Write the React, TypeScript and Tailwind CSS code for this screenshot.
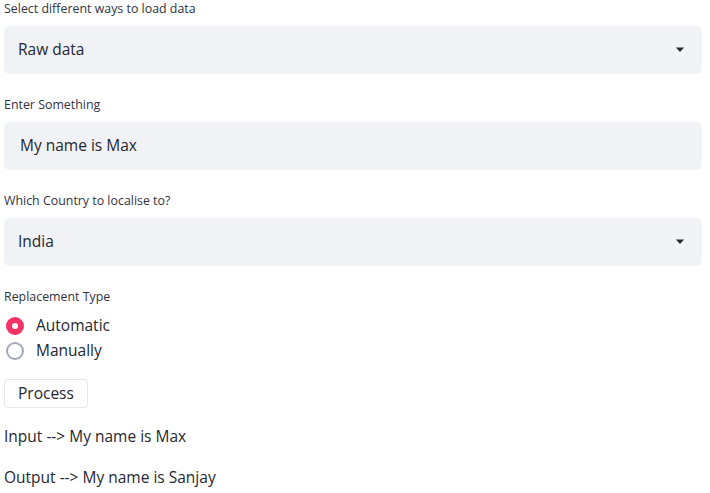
import React from "react";

const font = { fontFamily: '"Open Sans", "Noto Sans", sans-serif' };

function Caret() {
  return (
    <svg width="10" height="6" viewBox="0 0 10 6" className="shrink-0">
      <path d="M1 0.5 L9 0.5 L5 5 Z" fill="#262730" />
    </svg>
  );
}

function Label({ children }: { children: React.ReactNode }) {
  return (
    <div className="h-[18px] mb-2 text-[12.4px] leading-[18px] text-[#31333f]">{children}</div>
  );
}

function Select({ label, value }: { label: string; value: string }) {
  return (
    <div>
      <Label>{label}</Label>
      <div className="h-12 rounded-md bg-[#f0f2f6] flex items-center justify-between pl-[14px] pr-[17px] text-[15.5px] text-[#262730]">
        <span>{value}</span>
        <Caret />
      </div>
    </div>
  );
}

function Radio({ checked, label }: { checked?: boolean; label: string }) {
  return (
    <div className="flex items-center h-[25px] gap-3">
      {checked ? (
        <span className="ml-[2px] w-[18px] h-[18px] rounded-full bg-[#f63366] flex items-center justify-center">
          <span className="w-[6px] h-[6px] rounded-full bg-white" />
        </span>
      ) : (
        <span className="ml-[2px] w-[18px] h-[18px] rounded-full border-2 border-[#a3a8b8] bg-white" />
      )}
      <span className="text-[15.5px] text-[#262730]">{label}</span>
    </div>
  );
}

export default function App() {
  return (
    <div style={font} className="w-[710px] h-[493px] bg-white pl-1 pr-2 text-[#262730] overflow-hidden">
      <div className="flex flex-col gap-[22px]">
        <Select label="Select different ways to load data" value="Raw data" />
        <div>
          <Label>Enter Something</Label>
          <div className="h-12 rounded-md bg-[#f0f2f6] flex items-center pl-4 text-[15.5px]">
            My name is Max
          </div>
        </div>
        <Select label="Which Country to localise to?" value="India" />
        <div>
          <Label>Replacement Type</Label>
          <div className="flex flex-col -mt-[1px]">
            <Radio checked label="Automatic" />
            <Radio label="Manually" />
          </div>
        </div>
      </div>
      <div className="mt-[16px]">
        <button className="h-[29px] px-[13px] rounded border border-[#e6e7ec] bg-white text-[15.5px] leading-none">
          Process
        </button>
      </div>
      <p className="mt-[17px] text-[15.5px] leading-[22px]">Input --&gt; My name is Max</p>
      <p className="mt-[19px] text-[15.5px] leading-[22px]">Output --&gt; My name is Sanjay</p>
    </div>
  );
}
